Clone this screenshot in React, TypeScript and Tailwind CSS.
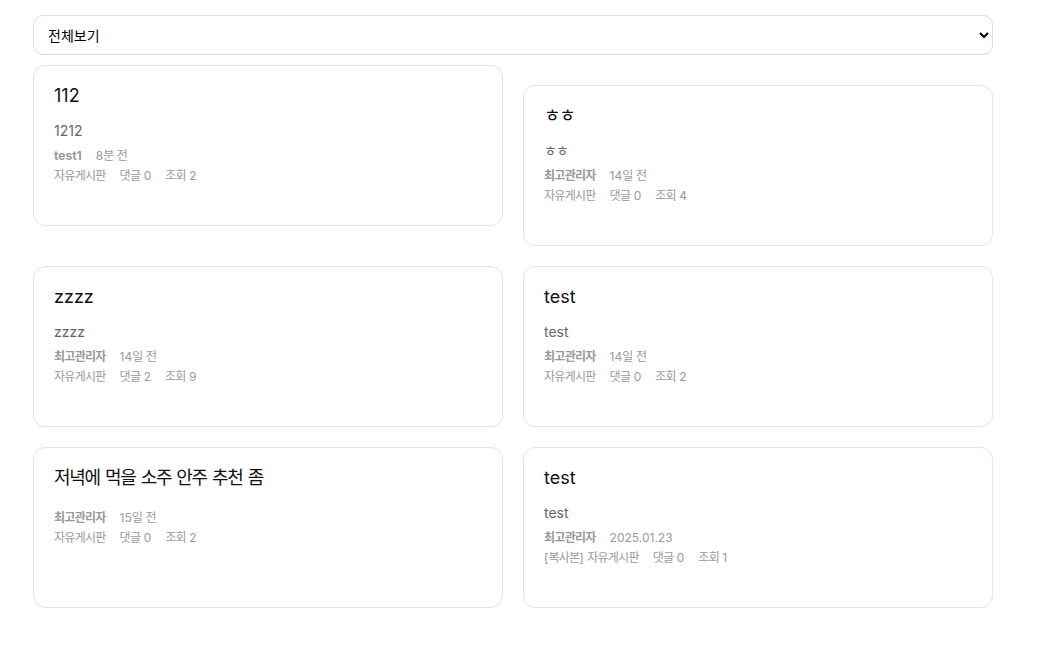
type Post = {
  title: string
  content: string
  author: string
  time: string
  board: string
  comments: number
  views: number
  offset?: boolean
}

const posts: Post[] = [
  { title: '112', content: '1212', author: 'test1', time: '8분 전', board: '자유게시판', comments: 0, views: 2 },
  { title: 'ㅎㅎ', content: 'ㅎㅎ', author: '최고관리자', time: '14일 전', board: '자유게시판', comments: 0, views: 4, offset: true },
  { title: 'zzzz', content: 'zzzz', author: '최고관리자', time: '14일 전', board: '자유게시판', comments: 2, views: 9 },
  { title: 'test', content: 'test', author: '최고관리자', time: '14일 전', board: '자유게시판', comments: 0, views: 2 },
  { title: '저녁에 먹을 소주 안주 추천 좀', content: '', author: '최고관리자', time: '15일 전', board: '자유게시판', comments: 0, views: 2 },
  { title: 'test', content: 'test', author: '최고관리자', time: '2025.01.23', board: '[복사본] 자유게시판', comments: 0, views: 1 },
]

// hangul runs are set a touch tighter than the CJK fallback font; latin and spaces untouched
const Ko = ({ text, tight = 'tracking-[-0.06em]' }: { text: string; tight?: string }) => (
  <>
    {text.split(/([가-힣ㄱ-ㅎ]+)/).map((part, i) =>
      /[가-힣ㄱ-ㅎ]/.test(part) ? (
        <span key={i} className={tight}>{part}</span>
      ) : (
        part
      )
    )}
  </>
)

const Card = ({ post }: { post: Post }) => (
  <div className={`h-[161px] rounded-xl border border-[#e5e5e5] bg-white px-5 pt-4 ${post.offset ? 'mt-5' : ''}`}>
    <div className="flex flex-col">
      <h3 className="mb-[11px] text-lg leading-7 text-[#111]">
        <Ko text={post.title} tight="tracking-[-0.07em]" />
      </h3>
      <p className="mb-[5px] text-sm leading-5 text-[#666]"><Ko text={post.content} /></p>
      <div className="flex gap-3.5 text-xs leading-5 text-[#999]">
        <span className="font-bold"><Ko text={post.author} /></span>
        <span><Ko text={post.time} /></span>
      </div>
      <div className="flex gap-3.5 text-xs leading-5 text-[#999]">
        <span><Ko text={post.board} /></span>
        <span><Ko text={`댓글 ${post.comments}`} /></span>
        <span><Ko text={`조회 ${post.views}`} /></span>
      </div>
    </div>
  </div>
)

const App = () => (
  <div className="min-h-screen bg-white font-['Inter','Noto_Sans_CJK_KR',sans-serif]">
    <div className="ml-[33px] w-[960px] pt-[15px]">
      <select className="h-10 w-full rounded-[10px] border border-[#dcdcdc] bg-white pl-2.5 pr-3 text-sm text-black">
        <option>전체보기</option>
        <option>자유게시판</option>
      </select>
      <div className="mt-2.5 grid grid-cols-2 items-start gap-5">
        {posts.map((p, i) => (
          <Card key={i} post={p} />
        ))}
      </div>
    </div>
  </div>
)

export default App
